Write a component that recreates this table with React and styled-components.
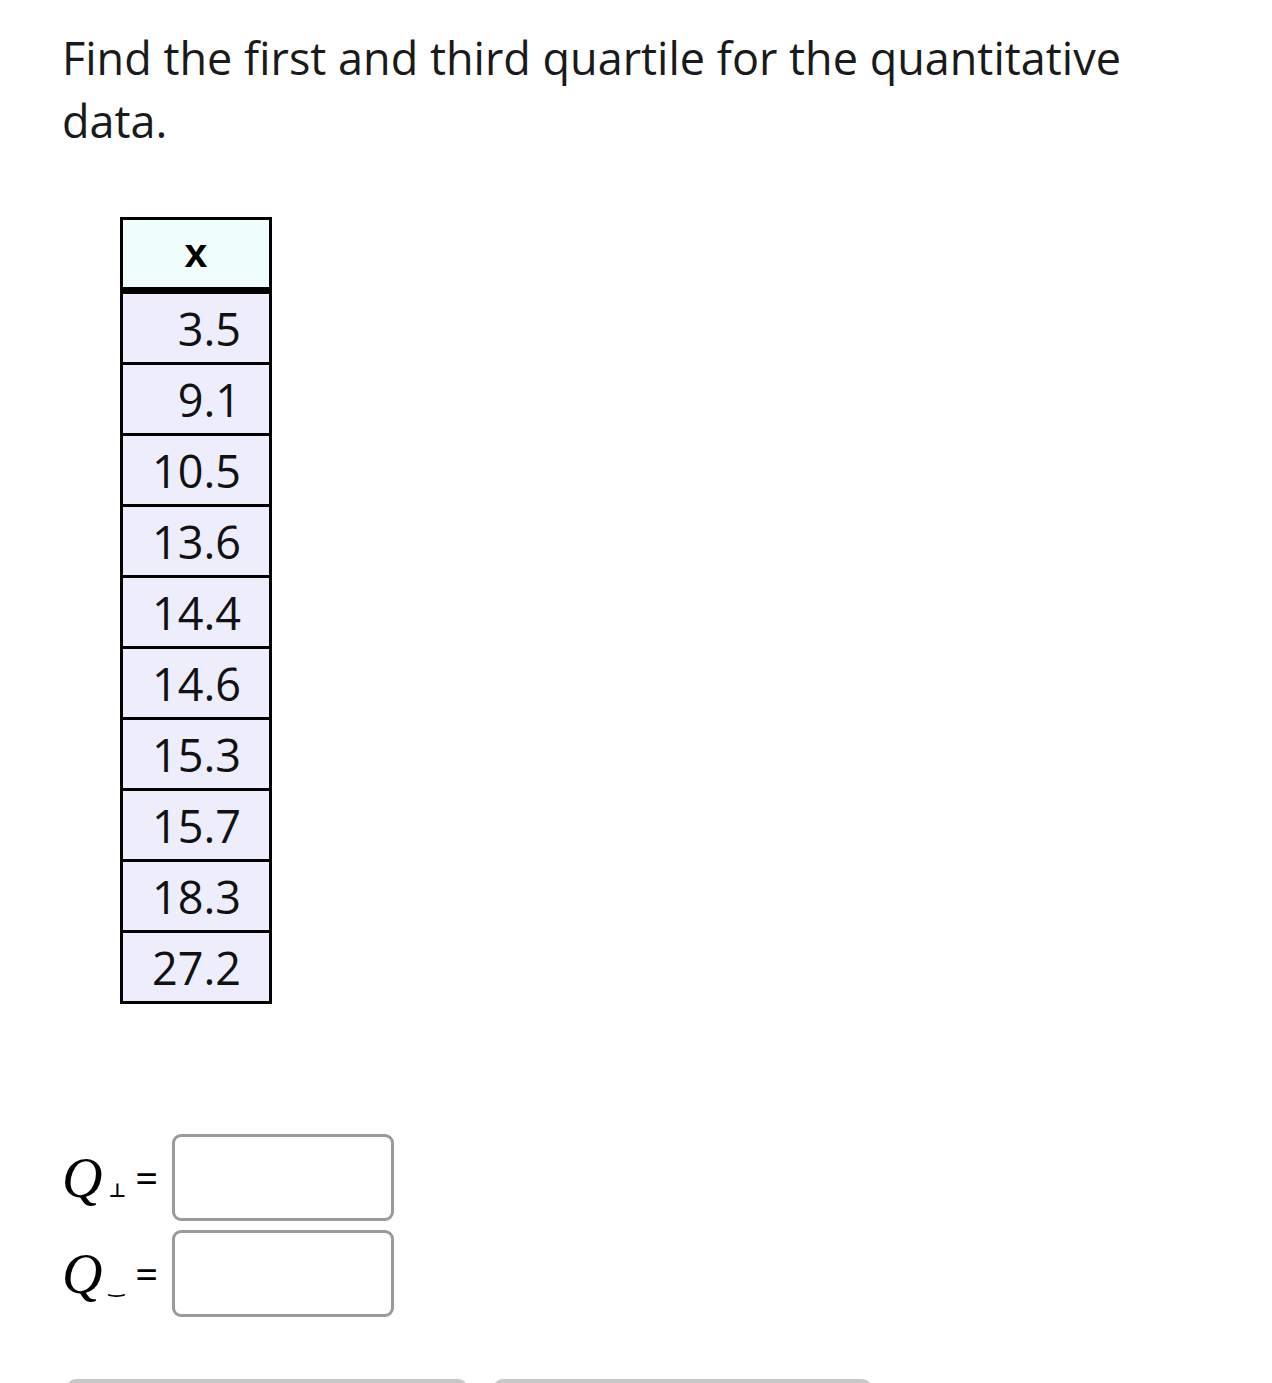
import React from 'react';
import styled, { createGlobalStyle } from 'styled-components';

const GlobalStyle = createGlobalStyle`
    body {
        margin: 0;
        background: #ffffff;
        font-family: "Open Sans", "Noto Sans", sans-serif;
        color: #1a1a1a;
    }
`;

const Page = styled.div`
    padding: 26px 0 0 62px;
    height: 1383px;
    box-sizing: border-box;
    overflow: hidden;
`;

const Question = styled.p`
    margin: 0;
    width: 1150px;
    font-size: 45px;
    line-height: 63px;
`;

const DataTable = styled.table`
    margin: 65px 0 0 58px;
    border-collapse: collapse;
    border: 3px solid #000;
    width: 152px;
`;

const HeadCell = styled.th`
    height: 67px;
    padding: 0;
    background: #effdfd;
    border-bottom: 7px solid #000;
    font-family: "Liberation Sans", Arial, sans-serif;
    font-size: 41px;
    font-weight: bold;
    text-align: center;
    color: #000;
`;

const Cell = styled.td`
    height: 68px;
    padding: 0 28px 0 0;
    background: #ededfc;
    border-top: 3px solid #000;
    font-size: 45px;
    text-align: right;
    color: #111;
`;

const Answers = styled.div`
    margin-top: 130px;
    display: flex;
    flex-direction: column;
    gap: 9px;
`;

const AnswerRow = styled.div`
    display: flex;
    align-items: center;
`;

const Label = styled.div`
    width: 110px;
    display: flex;
    align-items: center;
`;

const QLetter = styled.span`
    font-family: "Liberation Serif", "Times New Roman", serif;
    font-style: italic;
    font-size: 56px;
    color: #000;
`;

const Sub = styled.span`
    font-family: "DejaVu Sans", sans-serif;
    font-size: 19px;
    font-weight: bold;
    margin: 24px 0 0 6px;
    color: #000;
`;

const Equals = styled.span`
    margin-left: auto;
    margin-right: 14px;
    font-size: 40px;
    color: #000;
`;

const AnswerBox = styled.input`
    width: 222px;
    height: 87px;
    box-sizing: border-box;
    border: 3px solid #9a9a9a;
    border-radius: 9px;
    background: #fff;
    font-size: 32px;
    padding: 0 12px;
    outline: none;
`;

const Buttons = styled.div`
    margin-top: 62px;
    display: flex;
    gap: 25px;
    padding-left: 4px;
`;

const GreyButton = styled.div`
    width: ${p => p.w}px;
    height: 40px;
    background: #c8c8c8;
    border-radius: 10px 10px 0 0;
`;

const values = ['3.5', '9.1', '10.5', '13.6', '14.4', '14.6', '15.3', '15.7', '18.3', '27.2'];

export default function App() {
    return (
        <Page>
            <GlobalStyle />
            <Question>Find the first and third quartile for the quantitative data.</Question>
            <DataTable>
                <thead>
                    <tr><HeadCell>x</HeadCell></tr>
                </thead>
                <tbody>
                    {values.map(v => (
                        <tr key={v}><Cell>{v}</Cell></tr>
                    ))}
                </tbody>
            </DataTable>
            <Answers>
                <AnswerRow>
                    <Label><QLetter>Q</QLetter><Sub>⊥</Sub><Equals>=</Equals></Label>
                    <AnswerBox type="text" />
                </AnswerRow>
                <AnswerRow>
                    <Label><QLetter>Q</QLetter><Sub>‿</Sub><Equals>=</Equals></Label>
                    <AnswerBox type="text" />
                </AnswerRow>
            </Answers>
            <Buttons>
                <GreyButton w={402} />
                <GreyButton w={379} />
            </Buttons>
        </Page>
    );
}
